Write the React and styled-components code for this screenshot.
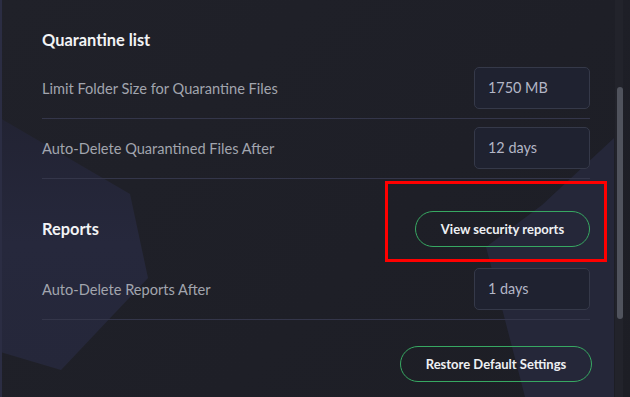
import React from 'react';
import styled, { createGlobalStyle } from 'styled-components';

const Global = createGlobalStyle`
  html, body { margin: 0; padding: 0; background: #1e1f27; }
  body { font-family: Lato, "Noto Sans", sans-serif; }
`;

const Screen = styled.div`
  position: relative;
  width: 630px;
  height: 397px;
  overflow: hidden;
  background: linear-gradient(135deg, #202129 0%, #1e1f27 60%, #1d1e25 100%);
  border-left: 2px solid #2b2d43;
  box-sizing: border-box;
  display: flex;
`;

const Backdrop = styled.svg`
  position: absolute;
  left: 0;
  top: 0;
  pointer-events: none;
`;

const Content = styled.div`
  position: relative;
  width: 548px;
  margin-left: 40px;
  display: flex;
  flex-direction: column;
`;

const SectionHeader = styled.div`
  height: ${(p) => p.$height}px;
  padding-bottom: ${(p) => p.$pb}px;
  box-sizing: border-box;
  display: flex;
  align-items: flex-end;
  justify-content: space-between;
`;

const Heading = styled.h2`
  margin: 0;
  height: 36px;
  line-height: 36px;
  font-size: 16.4px;
  font-weight: 700;
  color: #f2f3f5;
`;

const Row = styled.div`
  display: flex;
  align-items: center;
  justify-content: space-between;
  padding: 8px 0 9px;
  border-bottom: 1px solid #34364a;
`;

const Label = styled.span`
  font-size: 14.6px;
  color: #a2a5ae;
`;

const Field = styled.div`
  width: 116px;
  height: 42px;
  box-sizing: border-box;
  border: 1px solid #353949;
  border-radius: 5px;
  background: #1f2230;
  display: flex;
  align-items: center;
  padding: 0 0 2px 13px;
  font-size: 14.4px;
  color: #b3b6c6;
`;

const PillButton = styled.button`
  width: ${(p) => p.$width}px;
  height: 36px;
  border-radius: 18px;
  border: 1px solid #37a862;
  background: transparent;
  color: #eef0f3;
  font-family: Lato, "Noto Sans", sans-serif;
  font-size: 13px;
  font-weight: 700;
  cursor: pointer;
  padding: 0;
`;

const Footer = styled.div`
  display: flex;
  justify-content: flex-end;
  padding-top: 26px;
  margin-right: -2px;
`;

const ScrollTrack = styled.div`
  position: relative;
  margin-left: auto;
  margin-right: 7px;
  width: 8px;
  height: 100%;
  background: #22232b;
`;

const ScrollThumb = styled.div`
  position: absolute;
  left: 2px;
  top: 87px;
  width: 6px;
  height: 232px;
  border-radius: 3px;
  background: #50535d;
`;

const Highlight = styled.div`
  position: absolute;
  left: 383px;
  top: 181px;
  width: 222px;
  height: 81px;
  border: 3px solid #ff0000;
  box-sizing: border-box;
  pointer-events: none;
`;

export default function App() {
  return (
    <>
      <Global />
      <Screen>
        <Backdrop width="630" height="397" viewBox="0 0 630 397">
          <defs>
            <linearGradient id="leftShape" x1="0" y1="0" x2="0" y2="1">
              <stop offset="0" stopColor="#222333" />
              <stop offset="0.5" stopColor="#26283c" />
              <stop offset="1" stopColor="#25273a" />
            </linearGradient>
          </defs>
          <polygon points="-2,118 128,194 146,278 59,370 -2,352" fill="url(#leftShape)" />
          <polygon points="612,138 540,205 484,247 523,397 612,397" fill="#252739" />
        </Backdrop>
        <Content>
          <SectionHeader $height={59} $pb={1}>
            <Heading>Quarantine list</Heading>
          </SectionHeader>
          <Row>
            <Label>Limit Folder Size for Quarantine Files</Label>
            <Field>1750 MB</Field>
          </Row>
          <Row>
            <Label>Auto-Delete Quarantined Files After</Label>
            <Field>12 days</Field>
          </Row>
          <SectionHeader $height={81} $pb={13}>
            <Heading>Reports</Heading>
            <PillButton $width={175}>View security reports</PillButton>
          </SectionHeader>
          <Row>
            <Label>Auto-Delete Reports After</Label>
            <Field>1 days</Field>
          </Row>
          <Footer>
            <PillButton $width={192}>Restore Default Settings</PillButton>
          </Footer>
        </Content>
        <ScrollTrack>
          <ScrollThumb />
        </ScrollTrack>
        <Highlight />
      </Screen>
    </>
  );
}
